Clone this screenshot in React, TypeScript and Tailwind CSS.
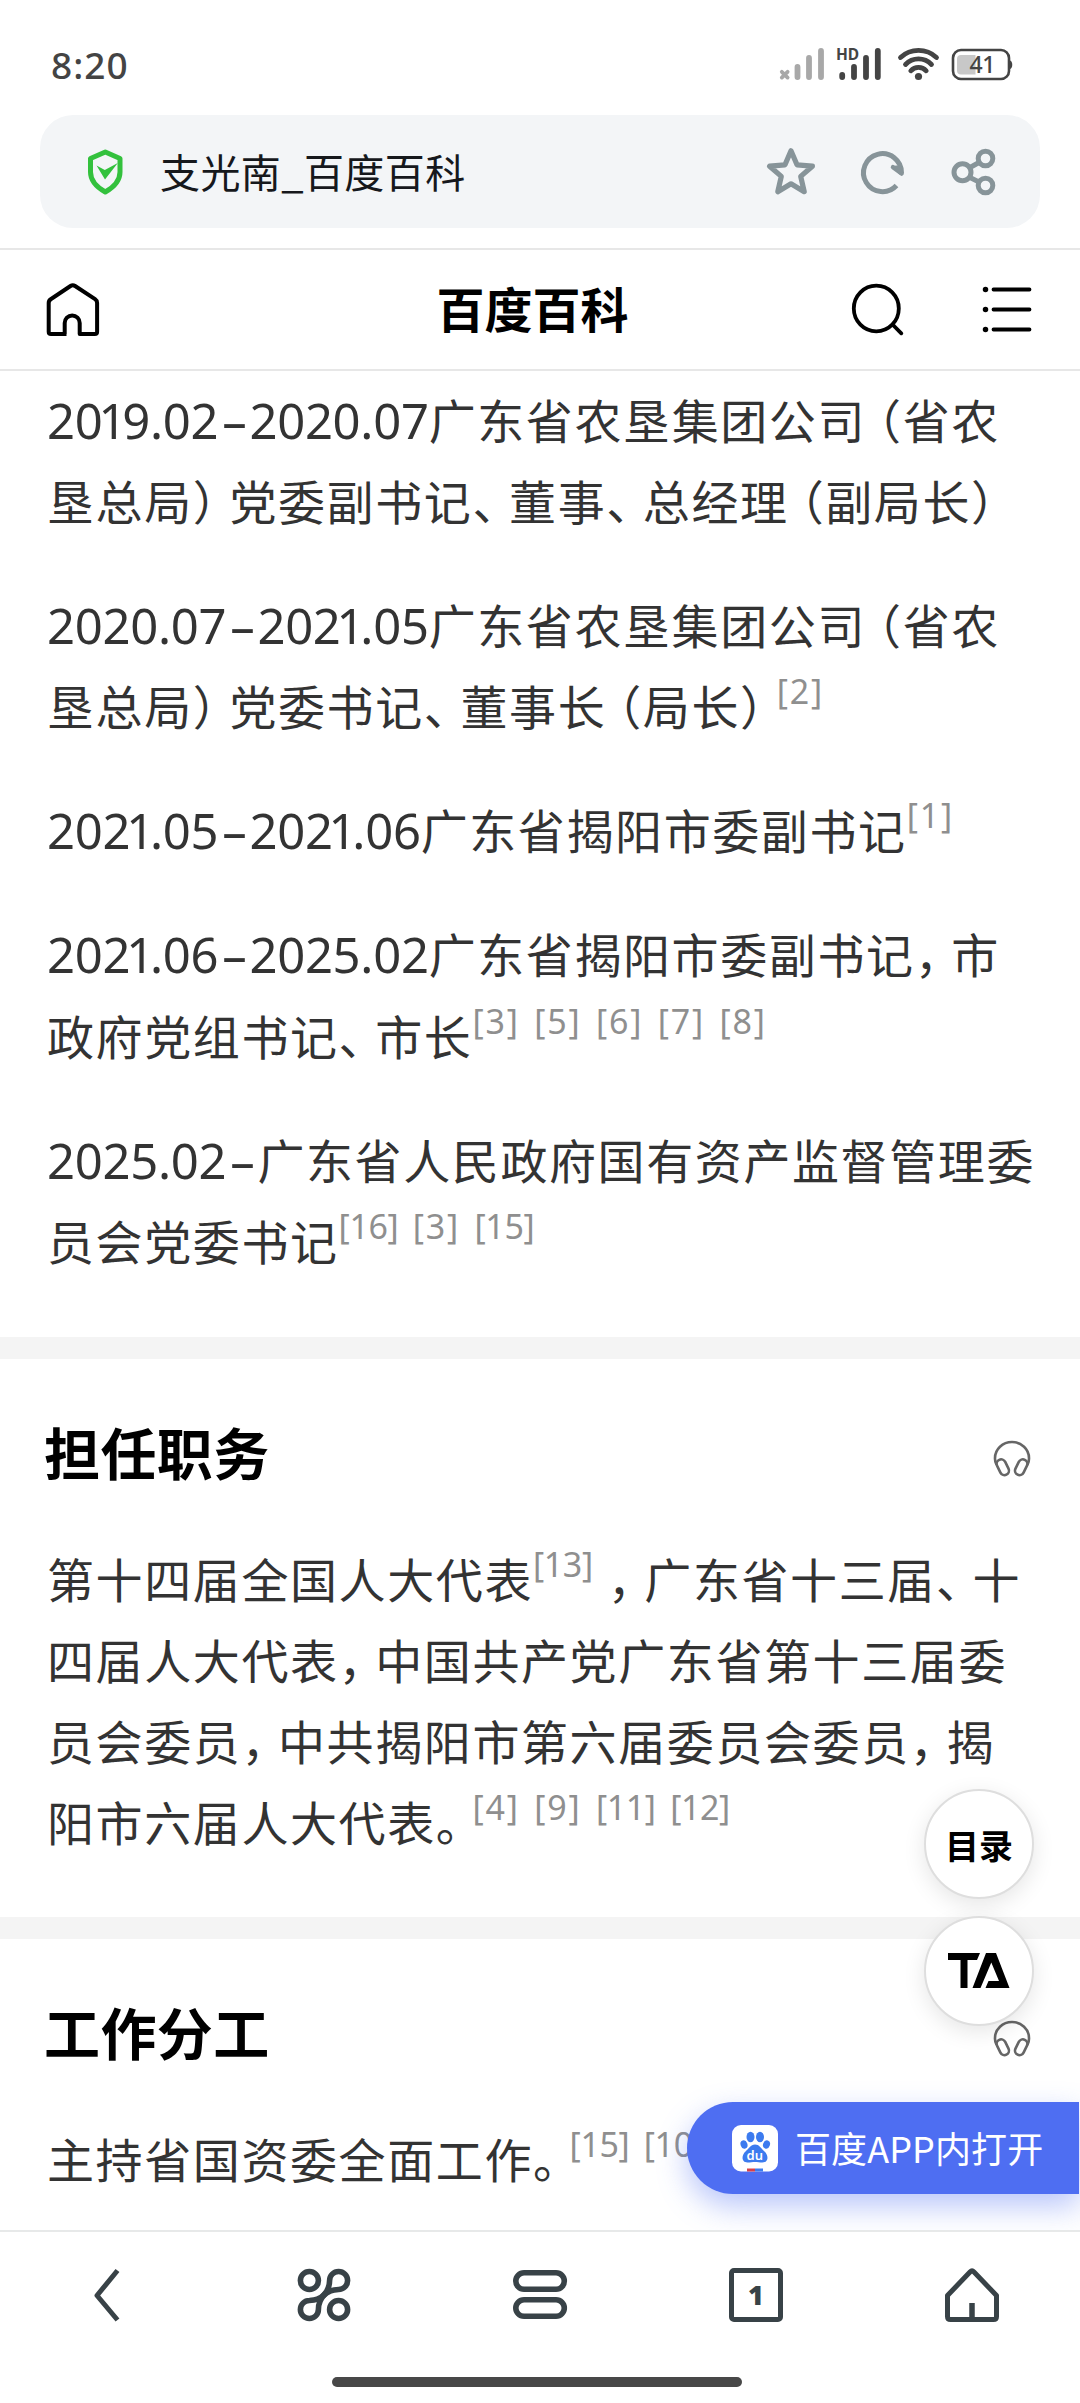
import type { ReactNode } from 'react';

const career = [
  { date: '2019.02–2020.07', lines: ['广东省农垦集团公司（省农', '垦总局）党委副书记、董事、总经理（副局长）'], refs: [] },
  { date: '2020.07–2021.05', lines: ['广东省农垦集团公司（省农', '垦总局）党委书记、董事长（局长）'], refs: ['2'] },
  { date: '2021.05–2021.06', lines: ['广东省揭阳市委副书记'], refs: ['1'] },
  { date: '2021.06–2025.02', lines: ['广东省揭阳市委副书记，市', '政府党组书记、市长'], refs: ['3', '5', '6', '7', '8'] },
  { date: '2025.02–', lines: ['广东省人民政府国有资产监督管理委', '员会党委书记'], refs: ['16', '3', '15'] },
];

// Pull full-width punctuation in so it takes about 3/4 of an em
function Cjk({ children }: { children: string }) {
  return (
    <>
      {children.split(/([（）、，。])/).map((part, i) => {
        if (part === '（') return <span key={i} className="-ml-[12px]">{part}</span>;
        if (/^[）、，。]$/.test(part)) return <span key={i} className="-mr-[12px]">{part}</span>;
        return part;
      })}
    </>
  );
}

function DateText({ children }: { children: string }) {
  return (
    <span className="font-['Noto_Sans'] text-[49px] tracking-[-0.3px]">
      {children.split(/([1–])/).map((part, i) => {
        if (part === '1') return <span key={i} className="-ml-[4px] -mr-[4px]">1</span>;
        if (part === '–') return <span key={i} className="ml-[4px] mr-[3px]">–</span>;
        return part;
      })}
    </span>
  );
}

function Refs({ items, className = '' }: { items: string[]; className?: string }) {
  return (
    <span className={`relative -top-[21px] inline-flex gap-[14.5px] font-['Noto_Sans'] text-[34px] leading-none text-[#8f8f8f] ${className}`}>
      {items.map((r, i) => (
        <span key={i} className={r.length > 1 ? 'tracking-[-0.4px]' : 'tracking-[1.8px]'}>[{r}]</span>
      ))}
    </span>
  );
}

function Line({ children }: { children: ReactNode }) {
  return <div className="h-[81.1px] whitespace-nowrap">{children}</div>;
}

function Headphones() {
  return (
    <svg width="38" height="38" viewBox="0 0 38 38" fill="none" stroke="#666" strokeWidth="2.6">
      <path d="M3.600 25C1.800 21.500 2 20 2 18A17 16 0 0 1 36 18C36 20 36.200 21.500 34.400 25" />
      <rect x="5.300" y="19" width="9" height="16.500" rx="4.500" transform="rotate(-26 9.800 27.200)" />
      <rect x="23.700" y="19" width="9" height="16.500" rx="4.500" transform="rotate(26 28.200 27.200)" />
    </svg>
  );
}

function SectionTitle({ children }: { children: string }) {
  return (
    <div className="flex h-[190px] items-center justify-between pl-[44px] pr-[49px]">
      <h2 className="-mt-[6px] text-[56px] font-bold leading-none tracking-[0.4px] text-black">{children}</h2>
      <div className="mt-[10px]">
        <Headphones />
      </div>
    </div>
  );
}

function StatusBar() {
  return (
    <div className="flex h-[115px] shrink-0 items-start justify-between pl-[51px] pr-[66px]">
      <div className="mt-[40px] font-['Noto_Sans'] text-[37px] font-medium leading-[50px] tracking-[1px] text-[#444]">8:20</div>
      <svg className="mt-[44px]" width="236" height="40" viewBox="778 44 236 40" fill="none">
        <g stroke="#a8a8a8" strokeLinecap="round">
          <path d="M781.800 71.800l5.800 5.800m0-5.800l-5.800 5.800" strokeWidth="3.800" />
          <path d="M797.500 67v10M809 58v19M821 51v26" strokeWidth="5.800" />
        </g>
        <path d="M842.200 75v2M854 67v10M866 58v19M877.800 51v26" stroke="#444" strokeWidth="5.800" strokeLinecap="round" />
        <text x="836" y="59.500" fontSize="15.500" fontWeight="700" fill="#444" fontFamily="Noto Sans">HD</text>
        <g stroke="#444" strokeWidth="4.800" strokeLinecap="round">
          <path d="M900.500 57.500a26.500 26.500 0 0 1 36 0" />
          <path d="M905.500 64.500a18 18 0 0 1 26 0" />
          <path d="M910.800 70.800a10.500 10.500 0 0 1 15.400 0" />
        </g>
        <circle cx="918.500" cy="76.500" r="3.600" fill="#444" />
        <rect x="953" y="50" width="56" height="29" rx="8" stroke="#444" strokeWidth="2.600" />
        <path d="M1010 60.500c3 1 3 7.500 0 8.500z" fill="#444" />
        <path d="M961 55h14.500v19.500H961a4 4 0 0 1-4-4v-11.500a4 4 0 0 1 4-4z" fill="#c8c8c8" />
        <text x="969.500" y="73" fontSize="23" fontWeight="500" fill="#444" fontFamily="Noto Sans" letterSpacing="-0.500">41</text>
      </svg>
    </div>
  );
}

function AddressBar() {
  return (
    <div className="mx-[40px] flex h-[113px] shrink-0 items-center rounded-[33px] bg-[#f3f5f7] pl-[46px] pr-[42px]">
      <svg width="38" height="48" viewBox="0 0 38 48" fill="none">
        <path d="M19.300 4L34 10.500V24C34 32 29 38.500 19.300 44 9.500 38.500 4.500 32 4.500 24V10.500z" stroke="#33c13d" strokeWidth="5" strokeLinejoin="round" />
        <path d="M10.500 17.500l8.300 4.500 13-7L19 31.500z" fill="#33c13d" />
      </svg>
      <div className="-mt-[2px] ml-[36px] text-[40px] leading-none tracking-[0.4px] text-[#16181c]">支光南_百度百科</div>
      <div className="ml-auto flex items-center text-[#879499]">
        <svg width="52" height="52" viewBox="0 0 52 52" fill="none" stroke="currentColor" strokeWidth="5.200" strokeLinejoin="round">
          <path d="M26 4.800l6 14 15.400 1.400-11.700 10.200 3.500 15.300L26 37.800 12.800 45.700l3.500-15.300L4.600 20.200 20 18.800z" />
        </svg>
        <svg className="ml-[41px]" width="48" height="48" viewBox="0 0 48 48" fill="none" stroke="currentColor" strokeWidth="5">
          <path d="M38.500 37.500A19 19 0 1 1 43.500 25" />
          <path d="M35 19.200L43.600 25.500" strokeWidth="4.500" strokeLinecap="round" />
          <path d="M34 18l9-1 2.300 9.500h-4z" fill="currentColor" stroke="none" />
        </svg>
        <svg className="ml-[44px]" width="48" height="48" viewBox="0 0 48 48" fill="none" stroke="currentColor" strokeWidth="5">
          <circle cx="12.500" cy="24.300" r="8.500" />
          <circle cx="35.500" cy="10.500" r="7.300" />
          <circle cx="35.500" cy="37.500" r="7.300" />
          <path d="M20 19.500l9-5M20 29.500l9 4.500" />
        </svg>
      </div>
    </div>
  );
}

function WikiHeader() {
  return (
    <header className="mt-[20px] grid h-[123px] shrink-0 grid-cols-3 items-center border-b-2 border-t-2 border-[#e7e7e7] bg-white pb-[2px] pl-[45px] pr-[48px]">
      <svg width="56" height="56" viewBox="45 281 56 56" fill="none" stroke="#000" strokeWidth="4" strokeLinejoin="round">
        <path d="M66.500 334H51q-2.300 0-2.300-2.300V303q0-2.500 2-3.800L70.500 286q2.300-1.500 4.600 0l20 13.200q2 1.300 2 3.800v28.700q0 2.300-2.300 2.300H79.700V323a7.500 7.500 0 0 0-15 0v11" />
      </svg>
      <h1 className="-mt-[3px] mr-[12px] justify-self-center whitespace-nowrap text-[48px] font-bold leading-none text-black">百度百科</h1>
      <div className="flex items-center justify-self-end">
        <svg width="56" height="56" viewBox="849 281 56 56" fill="none" stroke="#000" strokeWidth="3.800" strokeLinecap="round">
          <ellipse cx="876.300" cy="308.500" rx="22.500" ry="22.800" />
          <path d="M893.500 325.500l7.800 7.800" />
        </svg>
        <svg className="ml-[77px]" width="50" height="50" viewBox="982 284 50 50" fill="none" stroke="#000" strokeWidth="3.800" strokeLinecap="round">
          <path d="M993.500 289.500h36M993.500 309.500h36M993.500 329.500h36" />
          <path d="M985.500 289.500h.01M985.500 309.500h.01M985.500 329.500h.01" strokeWidth="5.500" />
        </svg>
      </div>
    </header>
  );
}

function FloatingButtons() {
  return (
    <>
      <div className="absolute right-[46px] top-[1789px] flex flex-col gap-[17px]">
        <button className="flex size-[110px] items-center justify-center rounded-full border-2 border-[#dedede] bg-white text-[34px] font-bold text-black shadow-[0_6px_22px_rgba(0,0,0,0.1)]">
          目录
        </button>
        <button className="flex size-[110px] items-center justify-center rounded-full border-2 border-[#dedede] bg-white shadow-[0_6px_22px_rgba(0,0,0,0.1)]" aria-label="TA">
          <svg width="62" height="36" viewBox="0 0 62 36">
            <path d="M0 0h32l-3 7H19.500v28h-7V7H0z" />
            <path d="M38 0h10l13.500 35H37.500l3-7H51L43.300 9.500 32.500 35h-8z" />
          </svg>
        </button>
      </div>
      <button className="absolute right-px top-[2102px] flex h-[92px] w-[392px] items-center rounded-l-full bg-[#4e6ef2] pl-[45px] text-white shadow-[0_12px_30px_rgba(78,110,242,0.4)]">
        <svg width="46" height="47" viewBox="0 0 46 47">
          <rect width="46" height="46.500" rx="9" fill="#fff" />
          <g fill="#3c7bef">
            <ellipse cx="18.500" cy="12" rx="4" ry="5.300" />
            <ellipse cx="28" cy="12" rx="4" ry="5.300" />
            <ellipse cx="12" cy="19.500" rx="3.400" ry="4.300" transform="rotate(-20 12 19.500)" />
            <ellipse cx="34.500" cy="19.500" rx="3.400" ry="4.300" transform="rotate(20 34.500 19.500)" />
            <path d="M23 19.500c4.500 0 6 4 9.500 7 4 3.500 4.500 11-2 11-3 0-5-.5-7.500-.5s-4.500.5-7.500.5c-6.500 0-6-7.500-2-11 3.500-3 5-7 9.500-7z" />
          </g>
          <text x="22.800" y="34.500" textAnchor="middle" fontSize="13" fontWeight="600" fill="#fff" fontFamily="Noto Sans">du</text>
          <path d="M15 43.500h8v3h-8z" fill="#d8404a" />
          <path d="M23 43.500h8v3h-8z" fill="#3c7bef" />
        </svg>
        <span className="-mt-[3px] ml-[17px] whitespace-nowrap text-[36px] leading-none tracking-[0.1px]">百度APP内打开</span>
      </button>
    </>
  );
}

function BottomNav() {
  return (
    <nav className="relative flex h-[173px] shrink-0 flex-col border-t-2 border-[#e7e9e9] bg-white">
      <div className="grid h-[126px] grid-cols-5 place-items-center text-[#384247]">
        <svg width="56" height="56" viewBox="0 0 56 56" fill="none" stroke="currentColor" strokeWidth="5" strokeLinejoin="round">
          <path d="M37.500 3.500L17 28.500l20.500 24.500" />
        </svg>
        <svg width="56" height="56" viewBox="0 0 56 56" fill="none" stroke="currentColor" strokeWidth="5.600" strokeLinejoin="round">
          <circle cx="13.400" cy="13.500" r="9" />
          <circle cx="42.600" cy="42.500" r="9" />
          <path d="M27 29C32.500 23.500 33.600 19 33.600 13.500a9 9 0 1 1 9 9C37 22.800 32.500 23.500 27 29z" />
          <path d="M29 27C23.500 32.500 22.400 37 22.400 42.500a9 9 0 1 1-9-9C19 33.200 23.500 32.500 29 27z" />
        </svg>
        <svg width="56" height="56" viewBox="0 0 56 56" fill="none" stroke="currentColor" strokeWidth="5.600">
          <rect x="3.800" y="5.800" width="48.500" height="16.500" rx="8.250" />
          <rect x="3.800" y="32.800" width="48.500" height="16.500" rx="8.250" />
        </svg>
        <div className="flex size-[54px] items-center justify-center rounded-[5px] border-[5px] border-current pb-px font-['Open_Sans'] text-[27px] font-extrabold leading-none">
          1
        </div>
        <svg width="56" height="56" viewBox="0 0 56 56" fill="none" stroke="currentColor" strokeWidth="5" strokeLinejoin="round">
          <path d="M6.500 52.500q-3 0-3-3V28.500L26 5q2-2 4 0l22.500 23.500v21q0 3-3 3z" />
          <path d="M28 36v16" strokeWidth="5.500" />
        </svg>
      </div>
      <div className="mx-auto mt-[19px] h-[10px] w-[410px] -translate-x-[3px] rounded-full bg-[#484848]" />
    </nav>
  );
}

export default function App() {
  return (
    <div className="relative flex h-[2403px] w-[1080px] flex-col overflow-hidden bg-white font-['Noto_Sans_CJK_SC',sans-serif]">
      <StatusBar />
      <AddressBar />
      <WikiHeader />

      <main className="relative min-h-0 flex-1 overflow-hidden text-[47px] leading-[81px] tracking-[1.6px] text-[#333]">
        <div className="flex h-[966px] flex-col gap-[43px] pl-[47px] pt-[7px]">
          {career.map((item, i) => (
            <div key={i}>
              {item.lines.map((line, j) => (
                <Line key={j}>
                  {j === 0 && <DateText>{item.date}</DateText>}
                  <Cjk>{line}</Cjk>
                  {j === item.lines.length - 1 && item.refs.length > 0 && <Refs items={item.refs} />}
                </Line>
              ))}
            </div>
          ))}
        </div>

        <section className="h-[580px] border-t-[22px] border-[#f4f4f4]">
          <SectionTitle>担任职务</SectionTitle>
          <div className="-mt-[12px] pl-[47px]">
            <Line>
              <Cjk>第十四届全国人大代表</Cjk>
              <Refs items={['13']} className="mr-[15px]" />
              <Cjk>，广东省十三届、十</Cjk>
            </Line>
            <Line><Cjk>四届人大代表，中国共产党广东省第十三届委</Cjk></Line>
            <Line><Cjk>员会委员，中共揭阳市第六届委员会委员，揭</Cjk></Line>
            <Line>
              <Cjk>阳市六届人大代表。</Cjk>
              <Refs items={['4', '9', '11', '12']} />
            </Line>
          </div>
        </section>

        <section className="border-t-[22px] border-[#f4f4f4]">
          <SectionTitle>工作分工</SectionTitle>
          <div className="-mt-[12px] pl-[47px]">
            <Line>
              <Cjk>主持省国资委全面工作。</Cjk>
              <Refs items={['15', '10']} />
            </Line>
          </div>
        </section>
      </main>

      <FloatingButtons />
      <BottomNav />
    </div>
  );
}
